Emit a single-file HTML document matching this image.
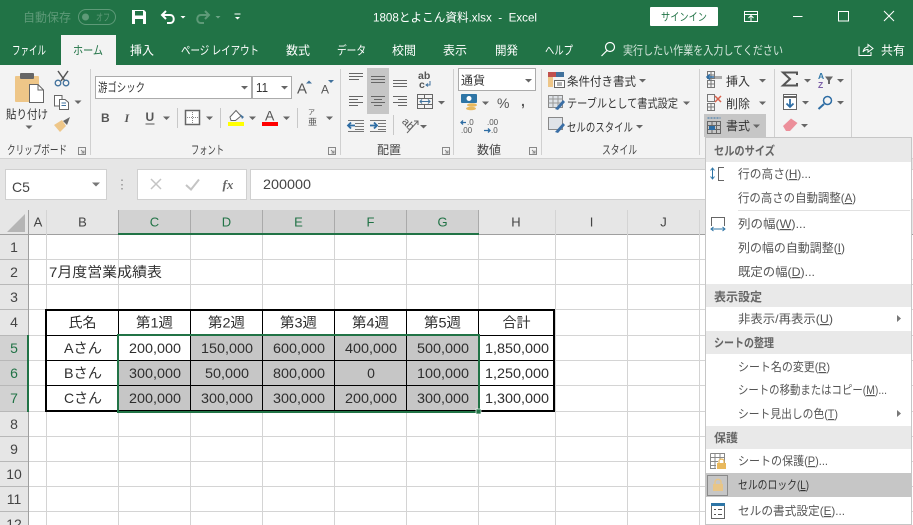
<!DOCTYPE html>
<html lang="ja"><head><meta charset="utf-8"><title>1808とよこん資料.xlsx - Excel</title>
<style>
html,body{margin:0;padding:0;background:#fff;overflow:hidden}
svg{display:block}
text{font-family:"Liberation Sans","Noto Sans CJK JP",sans-serif;fill:#444;font-size:12px;white-space:pre}
.w{fill:#fff}.t{fill:#fff;font-size:12px}
.c{font-size:14px;fill:#2e2e2e;text-anchor:middle}
.h{font-size:14px;fill:#444;text-anchor:middle}
.g{fill:#217346}
.r{font-size:12px;fill:#444}
.m{font-size:12px;fill:#555}
.mh{font-size:12px;fill:#666;font-weight:bold}
.u{text-decoration:underline}
.gl{stroke:#d4d4d4;stroke-width:1;fill:none}
.k{stroke:#000;stroke-width:1;fill:none}
</style></head><body>
<svg width="913" height="525" viewBox="0 0 913 525" xmlns="http://www.w3.org/2000/svg">
<defs><path id="a" d="M-3.5-1.5H3.5L0 2Z" fill="#666"/><path id="aw" d="M-2.5-1H2.5L0 1.5Z" fill="#fff"/></defs>
<!-- title bar -->
<rect width="913" height="65" fill="#217346"/>
<text x="23" y="21.5" style="fill:#5e9a78" textLength="48" lengthAdjust="spacingAndGlyphs">自動保存</text>
<rect x="78.500" y="9.500" width="37" height="15" rx="7.500" fill="none" stroke="#5e9a78"/>
<circle cx="85.500" cy="17" r="3.500" fill="#5e9a78"/>
<text x="96" y="21" style="fill:#5e9a78;font-size:10px" textLength="14" lengthAdjust="spacingAndGlyphs">オフ</text>
<path d="M132 10H144L146 12V24H132Z" fill="#fff"/><rect x="135" y="11" width="8" height="4.500" fill="#217346"/><rect x="135" y="19" width="8" height="5" fill="#217346"/>
<path d="M166 11L162 15L166 19M162 15H170C175 15 175 23 170 23H167" fill="none" stroke="#fff" stroke-width="2"/>
<use href="#aw" x="183" y="17"/>
<path d="M205 11L209 15L205 19M209 15H201C196 15 196 23 201 23H204" fill="none" stroke="#5e9a78" stroke-width="2"/>
<use href="#aw" x="218" y="17" opacity=".35"/>
<path d="M234.500 14H240.500" stroke="#fff"/><use href="#aw" x="237.500" y="18"/>
<text x="373" y="21.500" class="t" textLength="164" lengthAdjust="spacingAndGlyphs">1808とよこん資料.xlsx  -  Excel</text>
<rect x="650" y="7" width="68" height="19" rx="1" fill="#fff"/>
<text x="661" y="20.500" style="font-size:11px;fill:#217346" textLength="46" lengthAdjust="spacingAndGlyphs">サインイン</text>
<path d="M744.500 11.500H757.500V21.500H744.500ZM744.500 14.500H757.500M748.500 18L751 15.500L753.500 18M751 16V21" fill="none" stroke="#fff"/>
<path d="M793 16.500H802.500" stroke="#fff"/>
<rect x="838.500" y="11.500" width="10" height="9.500" fill="none" stroke="#fff"/>
<path d="M884 11L894 21M894 11L884 21" stroke="#fff"/>
<!-- tabs -->
<rect x="61" y="35" width="55" height="31" fill="#f3f3f3"/>
<text x="12" y="54.500" class="t" textLength="34" lengthAdjust="spacingAndGlyphs">ファイル</text>
<text x="73" y="54.500" class="g" textLength="30" lengthAdjust="spacingAndGlyphs">ホーム</text>
<text x="130" y="54.500" class="t" textLength="24" lengthAdjust="spacingAndGlyphs">挿入</text>
<text x="181" y="54.500" class="t" textLength="78" lengthAdjust="spacingAndGlyphs">ページ レイアウト</text>
<text x="286" y="54.500" class="t" textLength="24" lengthAdjust="spacingAndGlyphs">数式</text>
<text x="337" y="54.500" class="t" textLength="29" lengthAdjust="spacingAndGlyphs">データ</text>
<text x="392" y="54.500" class="t" textLength="24" lengthAdjust="spacingAndGlyphs">校閲</text>
<text x="443" y="54.500" class="t" textLength="24" lengthAdjust="spacingAndGlyphs">表示</text>
<text x="495" y="54.500" class="t" textLength="23" lengthAdjust="spacingAndGlyphs">開発</text>
<text x="545" y="54.500" class="t" textLength="28" lengthAdjust="spacingAndGlyphs">ヘルプ</text>
<circle cx="610" cy="47" r="4.500" fill="none" stroke="#fff" stroke-width="1.200"/><path d="M607 50.500L601.500 56" stroke="#fff" stroke-width="1.200"/>
<text x="623" y="54.500" style="fill:#d5e6dc" textLength="160" lengthAdjust="spacingAndGlyphs">実行したい作業を入力してください</text>
<path d="M859 46.500V55.500H871V52M863 52C864 48 866 47 868 47V44.500L873 48.500L868 52V49.500C866 49.500 864.500 50 863 52Z" fill="none" stroke="#fff"/>
<text x="881" y="54.500" class="t" textLength="24" lengthAdjust="spacingAndGlyphs">共有</text>
<!-- ribbon -->
<rect y="65" width="913" height="93" fill="#f3f3f3"/>
<rect y="158" width="913" height="52" fill="#e6e6e6"/>
<rect y="158" width="913" height="1" fill="#d2d2d2"/>
<path d="M90.500 69V155M340.500 69V155M453.500 69V155M541.500 69V155M699.500 69V155M774.500 69V155M851.500 69V155" stroke="#d0d0d0"/>
<!-- clipboard -->
<rect x="15" y="76" width="24" height="26" rx="1" fill="#eec688"/>
<rect x="20" y="73" width="14" height="6" rx="1" fill="#666"/>
<path d="M29.500 84.500H38L43.500 90V102.500H29.500Z" fill="#fff" stroke="#666"/><path d="M38 84.500V90H43.500" fill="none" stroke="#666"/>
<text x="6" y="118.500" style="fill:#333" textLength="42" lengthAdjust="spacingAndGlyphs">貼り付け</text><use href="#a" x="29" y="127"/>
<path d="M58 71L65 81M68 71L61 81" stroke="#555" stroke-width="1.500"/><circle cx="58" cy="83" r="2.800" fill="none" stroke="#41719c" stroke-width="1.300"/><circle cx="66" cy="83" r="2.800" fill="none" stroke="#41719c" stroke-width="1.300"/>
<path d="M54.500 95.500H62V106H54.500Z" fill="#fff" stroke="#666"/><path d="M59.500 99.500H65L68.500 102.500V109.500H59.500Z" fill="#fff" stroke="#666"/><path d="M61.500 103H66M61.500 105.500H66" stroke="#41719c"/>
<use href="#a" x="78" y="102"/>
<path d="M54 125L62 120L66 126L60 132Z" fill="#eec688"/><path d="M63 121L70 117L67 125Z" fill="#666"/>
<text x="7" y="154" class="r" textLength="60" lengthAdjust="spacingAndGlyphs">クリップボード</text>
<path d="M78.500 147.500H85.500V154.500H78.500ZM81 150L84 153M84 150.500V153H81.500" fill="none" stroke="#888"/>
<!-- font -->
<rect x="95.500" y="76.500" width="156" height="22" fill="#fff" stroke="#ababab"/>
<rect x="252.500" y="76.500" width="39" height="22" fill="#fff" stroke="#ababab"/>
<text x="98" y="91.500" style="fill:#333" textLength="47" lengthAdjust="spacingAndGlyphs">游ゴシック</text><use href="#a" x="244.500" y="87.500"/>
<text x="256" y="92" style="fill:#333;font-size:13px" textLength="12" lengthAdjust="spacingAndGlyphs">11</text><use href="#a" x="284.500" y="87.500"/>
<text x="297" y="93.500" style="font-size:15px;fill:#555">A</text><path d="M306 83.500H312L309 80.500Z" fill="#41719c"/>
<text x="321" y="93.500" style="font-size:12px;fill:#555">A</text><path d="M328 80H334L331 83Z" fill="#41719c"/>
<text x="101" y="122" style="font-size:12px;font-weight:bold;fill:#555">B</text>
<text x="124.500" y="122" style="font-size:12px;font-style:italic;fill:#555;font-family:'Liberation Serif',serif;font-weight:bold">I</text>
<text x="145.500" y="121" style="font-size:12px;font-weight:bold;fill:#555">U</text><path d="M145.500 124H154.500" stroke="#555"/>
<use href="#a" x="166.500" y="118"/>
<path d="M177.500 108V128M220.500 108V128M297.500 108V128" stroke="#c8c8c8"/>
<rect x="185.500" y="110.500" width="14" height="14" fill="#fff" stroke="#666" stroke-width="1.500"/><path d="M192.500 112V124M187 117.500H198" stroke="#888" stroke-dasharray="1 1"/>
<use href="#a" x="209.500" y="118"/>
<path d="M230 117L236 110.500L241 116L235.500 120.500H231Z" fill="#fff" stroke="#666"/><path d="M240 114L244 117L242 119Z" fill="#41719c"/>
<rect x="228" y="122" width="16" height="4" fill="#ffff00"/>
<use href="#a" x="252.500" y="118"/>
<text x="265" y="120.500" style="font-size:14px;fill:#555">A</text><rect x="262" y="122" width="16" height="4" fill="#f00"/>
<use href="#a" x="286.500" y="118"/>
<text x="308" y="114.500" style="font-size:7px;fill:#555">ア</text><text x="308" y="125" style="font-size:9px;fill:#555">亜</text>
<use href="#a" x="329.500" y="118"/>
<text x="191" y="154" class="r" textLength="33" lengthAdjust="spacingAndGlyphs">フォント</text>
<path d="M328.500 147.500H335.500V154.500H328.500ZM331 150L334 153M334 150.500V153H331.500" fill="none" stroke="#888"/>
<!-- alignment -->
<rect x="367" y="68" width="22" height="46" fill="#c6c6c6"/>
<path d="M349 73.500H363M349 76.500H363M349 79.500H359M371 76.500H385M371 79.500H385M371 82.500H385M393 80.500H407M393 83.500H407M393 86.500H407" stroke="#666"/>
<path d="M349 96.500H363M349 99.500H358M349 102.500H363M349 105.500H358M371 96.500H385M374 99.500H382M371 102.500H385M374 105.500H382M393 96.500H407M398 99.500H407M393 102.500H407M398 105.500H407" stroke="#666"/>
<text x="418" y="79" style="font-size:10.500px;font-weight:bold;fill:#555">ab</text><text x="419" y="88" style="font-size:10.500px;font-weight:bold;fill:#555">c</text><path d="M430 81V85H426.500M428 83.500L426 85L428 86.500" fill="none" stroke="#41719c"/>
<path d="M417.500 94.500H432.500V108.500H417.500ZM417.500 98.500H432.500M417.500 104.500H432.500M424.500 94.500V98.500M424.500 104.500V108.500" fill="none" stroke="#666"/>
<path d="M420 101.500H430M422 99.500L420 101.500L422 103.500M428 99.500L430 101.500L428 103.500" fill="none" stroke="#41719c"/>
<use href="#a" x="441.500" y="102.500"/>
<path d="M355 123.500H364M355 126.500H364M355 129.500H364M348 131.500H364M348 120.500H364M378 123.500H386M378 126.500H386M378 129.500H386M370 120.500H386M370 131.500H386" stroke="#777"/>
<path d="M348 125.500H355M351 122.500L348 125.500L351 128.500M370 125.500H377M374 122.500L377 125.500L374 128.500" fill="none" stroke="#2e6da4" stroke-width="1.800"/>
<path d="M393.500 115V135" stroke="#c8c8c8"/>
<text x="401" y="127" transform="rotate(45 407 125)" style="font-size:11px;fill:#555">ab</text><path d="M407 133L418 121M414 121H418V125" fill="none" stroke="#666"/>
<use href="#a" x="423.500" y="126.500"/>
<text x="377" y="154" class="r" textLength="24" lengthAdjust="spacingAndGlyphs">配置</text>
<path d="M442.500 147.500H449.500V154.500H442.500ZM445 150L448 153M448 150.500V153H445.500" fill="none" stroke="#888"/>
<!-- number -->
<rect x="458.500" y="68.500" width="77" height="22" fill="#fff" stroke="#ababab"/>
<text x="461" y="84.500" style="fill:#333" textLength="24" lengthAdjust="spacingAndGlyphs">通貨</text><use href="#a" x="528.500" y="80.500"/>
<rect x="461" y="94" width="16" height="9" rx="1" fill="#2e75a6"/><ellipse cx="469" cy="98.500" rx="2.500" ry="2.500" fill="#fff"/>
<ellipse cx="472" cy="105" rx="5" ry="1.800" fill="#e8b95f"/><ellipse cx="471" cy="108.500" rx="5" ry="1.800" fill="#e8b95f"/>
<use href="#a" x="485.500" y="103"/>
<text x="497" y="108" style="font-size:14px;fill:#555">%</text>
<text x="521" y="106" style="font-size:14px;font-weight:bold;fill:#555">,</text>
<text x="467" y="125" style="font-size:8px;fill:#555">.0</text><text x="461" y="133" style="font-size:8px;fill:#555">.00</text><path d="M461 122.500H466M463 120.500L461 122.500L463 124.500" fill="none" stroke="#2e6da4" stroke-width="1.300"/>
<text x="487" y="125" style="font-size:8px;fill:#555">.00</text><text x="491" y="133" style="font-size:8px;fill:#555">.0</text><path d="M484 130.500H490M488 128.500L490 130.500L488 132.500" fill="none" stroke="#2e6da4" stroke-width="1.300"/>
<text x="477" y="154" class="r" textLength="24" lengthAdjust="spacingAndGlyphs">数値</text>
<path d="M529.500 147.500H536.500V154.500H529.500ZM532 150L535 153M535 150.500V153H532.500" fill="none" stroke="#888"/>
<!-- style -->
<rect x="548" y="72" width="8" height="5" fill="#c0504d"/><rect x="556" y="72" width="8" height="5" fill="#41719c"/><rect x="548" y="77" width="5" height="10" fill="#eec688"/>
<rect x="554.500" y="80.500" width="10" height="7" fill="#fff" stroke="#666"/><path d="M557 83H562M557 85H562" stroke="#666"/>
<text x="567" y="85.500" style="fill:#333" textLength="69" lengthAdjust="spacingAndGlyphs">条件付き書式</text><use href="#a" x="642.500" y="80.500"/>
<rect x="548.500" y="95.500" width="14" height="12" fill="#dfe3e8" stroke="#888"/><path d="M548.500 99H562.500M553 95.500V107.500M558 95.500V107.500M548.500 103H562.500" stroke="#999"/>
<path d="M555 109L563 100L565 102L558 110Z" fill="#3a6ea5"/>
<text x="567" y="107.500" style="fill:#333" textLength="111" lengthAdjust="spacingAndGlyphs">テーブルとして書式設定</text><use href="#a" x="686.500" y="103"/>
<rect x="548.500" y="117.500" width="14" height="12" fill="#dfe3e8" stroke="#888"/>
<path d="M555 132L563 123L565 125L558 133Z" fill="#3a6ea5"/>
<text x="567" y="131.500" style="fill:#333" textLength="66" lengthAdjust="spacingAndGlyphs">セルのスタイル</text><use href="#a" x="639.500" y="126.500"/>
<text x="602" y="154" class="r" textLength="35" lengthAdjust="spacingAndGlyphs">スタイル</text>
<!-- cells -->
<rect x="704" y="114" width="62" height="23" fill="#c6c6c6"/>
<path d="M707.500 71.500H714.500V78.500H707.500ZM707.500 80.500H714.500V87.500H707.500ZM711 71.500V87.500M707.500 75H714.500M707.500 84H714.500" fill="none" stroke="#777"/>
<rect x="715" y="76" width="7" height="3" fill="#aaa"/><path d="M707 77H714M710 74.500L707 77L710 79.500" fill="none" stroke="#2e6da4" stroke-width="1.500"/>
<text x="726" y="85.500" style="fill:#333" textLength="24" lengthAdjust="spacingAndGlyphs">挿入</text><use href="#a" x="762.500" y="80.500"/>
<path d="M707.500 94.500H714.500V101.500H707.500ZM707.500 103.500H714.500V110.500H707.500ZM711 103.500V110.500M707.500 107H714.500" fill="none" stroke="#777"/>
<path d="M715 96L721 102M721 96L715 102" stroke="#d9614c" stroke-width="1.500"/>
<text x="726" y="108" style="fill:#333" textLength="24" lengthAdjust="spacingAndGlyphs">削除</text><use href="#a" x="762.500" y="103"/>
<path d="M707.500 121.500H720.500V133.500H707.500ZM707.500 125.500H720.500M707.500 129.500H720.500M712 121.500V133.500M716.500 121.500V133.500" fill="none" stroke="#666"/>
<rect x="709" y="126" width="6" height="4" fill="#2e6da4"/><path d="M707.500 118H720.500" stroke="#2e6da4" stroke-dasharray="2 1"/>
<text x="726" y="130" style="fill:#333" textLength="24" lengthAdjust="spacingAndGlyphs">書式</text><use href="#a" x="756.500" y="126"/>
<!-- editing -->
<path d="M797 75V72.500H783L790 79L783 85.500H797V83" fill="none" stroke="#555" stroke-width="2"/>
<use href="#a" x="807.500" y="80.500"/>
<text x="818" y="79" style="font-size:8.500px;fill:#2e75a6;font-weight:bold">A</text><text x="818" y="88" style="font-size:8.500px;fill:#7b5ea7;font-weight:bold">Z</text>
<path d="M825 76.500H833L830 80.500V84H828V80.500Z" fill="#666"/><use href="#a" x="840.500" y="80.500"/>
<rect x="783.500" y="94.500" width="13" height="15" fill="#fff" stroke="#666"/><path d="M783.500 97H796.500" stroke="#666" stroke-width="2"/>
<path d="M790 99V107M786.500 103.500L790 107L793.500 103.500" fill="none" stroke="#2e6da4" stroke-width="1.800"/><use href="#a" x="805.500" y="102.500"/>
<circle cx="827.500" cy="100.500" r="4" fill="none" stroke="#2e6da4" stroke-width="1.500"/><path d="M824 104L818.500 109" stroke="#2e6da4" stroke-width="2"/><use href="#a" x="840.500" y="102.500"/>
<path d="M783 126L791 118.500L797.500 123L790 131H786Z" fill="#ec8f9a"/><use href="#a" x="804.500" y="125.500"/>
<!-- formula bar -->
<rect x="5.500" y="169.500" width="101" height="30" fill="#fff" stroke="#d0d0d0"/>
<text x="12" y="192" style="font-size:14px;fill:#444">C5</text>
<path d="M92 182.500H100L96 186.500Z" fill="#777"/>
<path d="M122 179.500V181M122 184V185.500M122 188V189.500" stroke="#aaa" stroke-width="2"/>
<rect x="137.500" y="169.500" width="109" height="30" fill="#fff" stroke="#d0d0d0"/>
<path d="M151 179L161 189M161 179L151 189" stroke="#c4c4c4" stroke-width="1.500"/>
<path d="M186 185L191 189.500L199 179.500" fill="none" stroke="#c4c4c4" stroke-width="2"/>
<text x="222.500" y="189" style="font-family:'Liberation Serif',serif;font-style:italic;font-weight:bold;font-size:13px;fill:#666">fx</text>
<rect x="250.500" y="169.500" width="670" height="30" fill="#fff" stroke="#d0d0d0"/>
<text x="263" y="189" style="font-size:14px;fill:#444" textLength="48" lengthAdjust="spacingAndGlyphs">200000</text>
<!-- sheet -->
<rect y="210" width="913" height="315" fill="#fff"/>
<rect y="210" width="913" height="25" fill="#e6e6e6"/>
<rect y="235" width="28" height="290" fill="#e6e6e6"/>
<rect x="118" y="210" width="361" height="25" fill="#d2d2d2"/>
<rect y="335" width="28" height="76" fill="#d2d2d2"/>
<path d="M25 214V232H7Z" fill="#b5b5b5"/>
<path d="M28.500 210V525" stroke="#9f9f9f"/>
<path d="M0 234.500H913" stroke="#9f9f9f"/>
<path class="gl" d="M46.500 210V525M118.500 210V525M190.500 210V525M262.500 210V525M334.500 210V525M406.500 210V525M478.500 210V525M555.500 210V525M627.500 210V525M699.500 210V525M771.500 210V525M29 259.500H913M29 284.500H913M29 309.500H913M29 335.500H913M29 360.500H913M29 385.500H913M29 411.500H913M29 436.500H913M29 461.500H913M29 486.500H913M29 511.500H913"/>
<path d="M0 259.500H28M0 284.500H28M0 309.500H28M0 335.500H28M0 360.500H28M0 385.500H28M0 411.500H28M0 436.500H28M0 461.500H28M0 486.500H28M0 511.500H28" stroke="#b8b8b8"/>
<path d="M118.500 210V234M190.500 210V234M262.500 210V234M334.500 210V234M406.500 210V234M478.500 210V234" stroke="#aaa"/>
<!-- table fills -->
<rect x="119" y="361" width="360" height="50" fill="#c6c6c6"/>
<rect x="191" y="336" width="288" height="25" fill="#c6c6c6"/>
<rect x="47" y="311" width="71" height="100" fill="#fff"/>
<rect x="118" y="311" width="360" height="24" fill="#fff"/>
<rect x="479" y="311" width="75" height="100" fill="#fff"/>
<rect x="119" y="336" width="71" height="24" fill="#fff"/>
<path class="k" d="M46 335.500H554M46 360.500H554M46 385.500H554M118.500 310V411M190.500 310V411M262.500 310V411M334.500 310V411M406.500 310V411M478.500 310V411"/>
<rect x="46" y="310" width="508" height="101" fill="none" stroke="#000" stroke-width="2"/>
<rect x="118" y="335" width="361" height="77" fill="none" stroke="#217346" stroke-width="2"/>
<rect x="476" y="409" width="5" height="5" fill="#217346" stroke="#fff" stroke-width=".7"/>
<rect x="118" y="233" width="361" height="2" fill="#217346"/>
<rect x="27" y="335" width="2" height="77" fill="#217346"/>
<!-- headers -->
<text x="38" y="226.500" class="h" style="font-size:13px">A</text><text x="82.500" y="226.500" class="h" style="font-size:13px">B</text>
<text x="154.500" y="226.500" class="h g" style="font-size:13px">C</text><text x="226.500" y="226.500" class="h g" style="font-size:13px">D</text><text x="298.500" y="226.500" class="h g" style="font-size:13px">E</text><text x="370.500" y="226.500" class="h g" style="font-size:13px">F</text><text x="442.500" y="226.500" class="h g" style="font-size:13px">G</text><text x="516" y="226.500" class="h" style="font-size:13px">H</text><text x="591.500" y="226.500" class="h" style="font-size:13px">I</text><text x="663.500" y="226.500" class="h" style="font-size:13px">J</text>
<text x="14" y="252" class="h">1</text><text x="14" y="277" class="h">2</text><text x="14" y="302" class="h">3</text><text x="14" y="327" class="h">4</text><text x="14" y="353" class="h g">5</text><text x="14" y="378" class="h g">6</text><text x="14" y="403" class="h g">7</text><text x="14" y="429" class="h">8</text><text x="14" y="454" class="h">9</text><text x="14" y="479" class="h">10</text><text x="14" y="504" class="h">11</text><text x="14" y="529" class="h">12</text>
<!-- cell text -->
<text x="49" y="277" style="font-size:14px;fill:#333" textLength="113" lengthAdjust="spacingAndGlyphs">7月度営業成績表</text>
<text x="82.500" y="327.500" class="c" textLength="28" lengthAdjust="spacingAndGlyphs">氏名</text><text x="154.500" y="327.500" class="c" textLength="37" lengthAdjust="spacingAndGlyphs">第1週</text><text x="226.500" y="327.500" class="c" textLength="37" lengthAdjust="spacingAndGlyphs">第2週</text><text x="298.500" y="327.500" class="c" textLength="37" lengthAdjust="spacingAndGlyphs">第3週</text><text x="370.500" y="327.500" class="c" textLength="37" lengthAdjust="spacingAndGlyphs">第4週</text><text x="442.500" y="327.500" class="c" textLength="37" lengthAdjust="spacingAndGlyphs">第5週</text><text x="516.500" y="327.500" class="c" textLength="28" lengthAdjust="spacingAndGlyphs">合計</text>
<text x="83" y="353" class="c" textLength="38" lengthAdjust="spacingAndGlyphs">Aさん</text><text x="155" y="353" class="c" textLength="52" lengthAdjust="spacingAndGlyphs">200,000</text><text x="227" y="353" class="c" textLength="52" lengthAdjust="spacingAndGlyphs">150,000</text><text x="299" y="353" class="c" textLength="52" lengthAdjust="spacingAndGlyphs">600,000</text><text x="371" y="353" class="c" textLength="52" lengthAdjust="spacingAndGlyphs">400,000</text><text x="443" y="353" class="c" textLength="52" lengthAdjust="spacingAndGlyphs">500,000</text><text x="517" y="353" class="c" textLength="64" lengthAdjust="spacingAndGlyphs">1,850,000</text>
<text x="83" y="378" class="c" textLength="38" lengthAdjust="spacingAndGlyphs">Bさん</text><text x="155" y="378" class="c" textLength="52" lengthAdjust="spacingAndGlyphs">300,000</text><text x="227" y="378" class="c" textLength="44" lengthAdjust="spacingAndGlyphs">50,000</text><text x="299" y="378" class="c" textLength="52" lengthAdjust="spacingAndGlyphs">800,000</text><text x="371" y="378" class="c">0</text><text x="443" y="378" class="c" textLength="52" lengthAdjust="spacingAndGlyphs">100,000</text><text x="517" y="378" class="c" textLength="64" lengthAdjust="spacingAndGlyphs">1,250,000</text>
<text x="83" y="403" class="c" textLength="38" lengthAdjust="spacingAndGlyphs">Cさん</text><text x="155" y="403" class="c" textLength="52" lengthAdjust="spacingAndGlyphs">200,000</text><text x="227" y="403" class="c" textLength="52" lengthAdjust="spacingAndGlyphs">300,000</text><text x="299" y="403" class="c" textLength="52" lengthAdjust="spacingAndGlyphs">300,000</text><text x="371" y="403" class="c" textLength="52" lengthAdjust="spacingAndGlyphs">200,000</text><text x="443" y="403" class="c" textLength="52" lengthAdjust="spacingAndGlyphs">300,000</text><text x="517" y="403" class="c" textLength="64" lengthAdjust="spacingAndGlyphs">1,300,000</text>
<!-- dropdown menu -->
<rect x="705.500" y="137.500" width="206" height="387" fill="#fff" stroke="#c6c6c6"/>
<rect x="706" y="138" width="205" height="24" fill="#e9e9e9"/>
<rect x="706" y="284" width="205" height="23" fill="#e9e9e9"/>
<rect x="706" y="331" width="205" height="23" fill="#e9e9e9"/>
<rect x="706" y="426" width="205" height="23" fill="#e9e9e9"/>
<rect x="706" y="473" width="205" height="24" fill="#c6c6c6"/>
<path d="M738 210.500H910" stroke="#e1e1e1"/>
<text x="714" y="155" class="mh" textLength="61" lengthAdjust="spacingAndGlyphs">セルのサイズ</text>
<text x="714" y="301" class="mh" textLength="48" lengthAdjust="spacingAndGlyphs">表示設定</text>
<text x="714" y="347" class="mh" textLength="60" lengthAdjust="spacingAndGlyphs">シートの整理</text>
<text x="714" y="442" class="mh" textLength="24" lengthAdjust="spacingAndGlyphs">保護</text>
<text x="738" y="178" class="m" textLength="73" lengthAdjust="spacingAndGlyphs">行の高さ(<tspan class="u">H</tspan>)...</text>
<text x="738" y="202" class="m" textLength="118" lengthAdjust="spacingAndGlyphs">行の高さの自動調整(<tspan class="u">A</tspan>)</text>
<text x="738" y="228" class="m" textLength="68" lengthAdjust="spacingAndGlyphs">列の幅(<tspan class="u">W</tspan>)...</text>
<text x="738" y="252" class="m" textLength="107" lengthAdjust="spacingAndGlyphs">列の幅の自動調整(<tspan class="u">I</tspan>)</text>
<text x="738" y="276" class="m" textLength="77" lengthAdjust="spacingAndGlyphs">既定の幅(<tspan class="u">D</tspan>)...</text>
<text x="738" y="323" class="m" textLength="95" lengthAdjust="spacingAndGlyphs">非表示/再表示(<tspan class="u">U</tspan>)</text>
<text x="738" y="371" class="m" textLength="92" lengthAdjust="spacingAndGlyphs">シート名の変更(<tspan class="u">R</tspan>)</text>
<text x="738" y="394" class="m" textLength="149" lengthAdjust="spacingAndGlyphs">シートの移動またはコピー(<tspan class="u">M</tspan>)...</text>
<text x="738" y="418" class="m" textLength="100" lengthAdjust="spacingAndGlyphs">シート見出しの色(<tspan class="u">T</tspan>)</text>
<text x="738" y="465" class="m" textLength="90" lengthAdjust="spacingAndGlyphs">シートの保護(<tspan class="u">P</tspan>)...</text>
<text x="738" y="489" class="m" style="fill:#333" textLength="71" lengthAdjust="spacingAndGlyphs">セルのロック(<tspan class="u">L</tspan>)</text>
<text x="738" y="515" class="m" textLength="107" lengthAdjust="spacingAndGlyphs">セルの書式設定(<tspan class="u">E</tspan>)...</text>
<path d="M897 315L901 318.500L897 322ZM897 410L901 413.500L897 417Z" fill="#777"/>
<!-- menu icons -->
<path d="M712.500 168V179M710.500 170.500L712.500 168L714.500 170.500M710.500 176.500L712.500 179L714.500 176.500" fill="none" stroke="#2e75a6"/>
<path d="M724 167.500H718.500V180.500H724" fill="none" stroke="#666"/>
<path d="M711.500 226V217.500H724.500V226" fill="none" stroke="#666"/>
<path d="M711 229H725M713.500 227L711 229L713.500 231M722.500 227L725 229L722.500 231" fill="none" stroke="#2e75a6"/>
<path d="M710.500 453.500H724.500V465.500H717M710.500 453.500V468.500H716M710.500 457.500H724.500M710.500 461.500H718M710.500 465.500H716M715 453.500V468.500M720 453.500V460" fill="none" stroke="#888"/>
<rect x="717" y="463" width="9" height="6" fill="#e9b85c"/><path d="M719 463V461C719 458.500 724 458.500 724 461V463" fill="none" stroke="#e9b85c" stroke-width="1.200"/>
<rect x="707.500" y="475.500" width="20" height="20" fill="#c6c6c6" stroke="#8a8a8a"/>
<rect x="713" y="484" width="10" height="7" fill="#e8c586"/><path d="M715 484V482C715 478.500 721 478.500 721 482V484" fill="none" stroke="#e8c586" stroke-width="1.500"/>
<rect x="711.500" y="503.500" width="13" height="15" fill="#fff" stroke="#666"/><rect x="711" y="503" width="14" height="3" fill="#2e75a6"/>
<path d="M714 509.500H716M714 514.500H716M718 509.500H722M718 514.500H722" stroke="#555"/>
</svg>
</body></html>
